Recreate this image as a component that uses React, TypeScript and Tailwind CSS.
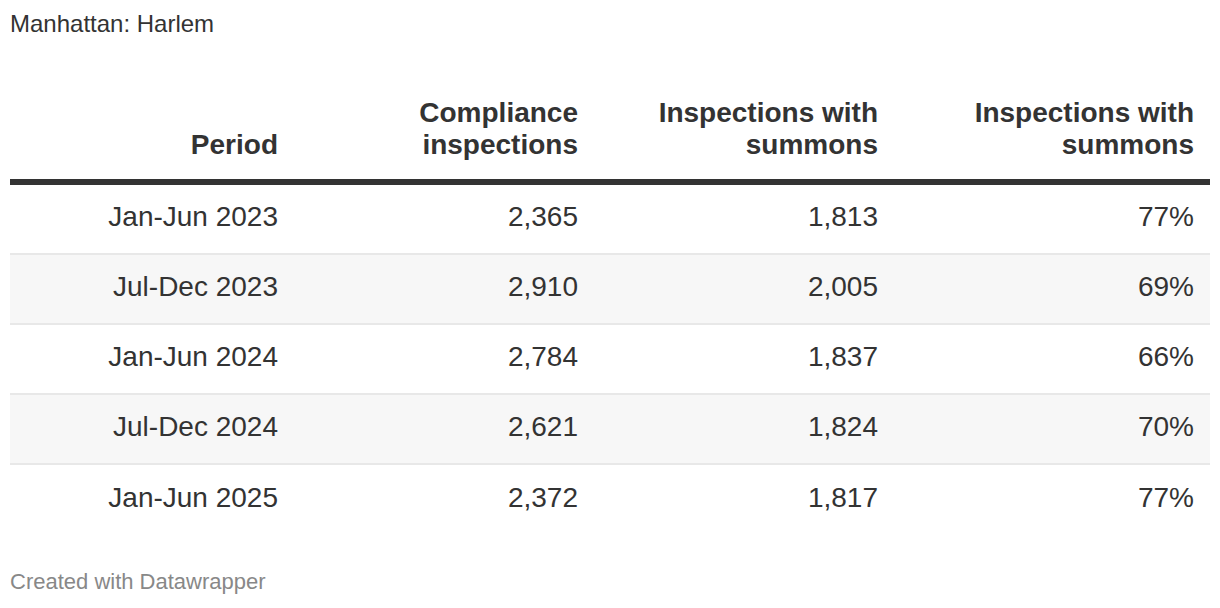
// App.tsx
const rows = [
  { period: 'Jan-Jun 2023', inspections: '2,365', summons: '1,813', share: '77%' },
  { period: 'Jul-Dec 2023', inspections: '2,910', summons: '2,005', share: '69%' },
  { period: 'Jan-Jun 2024', inspections: '2,784', summons: '1,837', share: '66%' },
  { period: 'Jul-Dec 2024', inspections: '2,621', summons: '1,824', share: '70%' },
  { period: 'Jan-Jun 2025', inspections: '2,372', summons: '1,817', share: '77%' },
]

const cols = 'grid grid-cols-[268px_300px_300px_332px]'

export default function App() {
  return (
    <div className="h-[608px] w-[1220px] overflow-hidden bg-white px-[10px] font-['Liberation_Sans',Arial,sans-serif] text-[#333333]">
      <p className="pt-[9px] text-[24px] leading-[30px]">Manhattan: Harlem</p>

      <div className="mt-[58px]">
        <div className={`${cols} items-end border-b-[6px] border-[#333333] pb-[18px] text-right text-[28px] font-bold leading-[32px]`}>
          <div>Period</div>
          <div>
            Compliance
            <br />
            inspections
          </div>
          <div>
            Inspections with
            <br />
            summons
          </div>
          <div className="pr-[16px]">
            Inspections with
            <br />
            summons
          </div>
        </div>

        {rows.map((r, i) => (
          <div
            key={r.period}
            className={`${cols} h-[70px] items-center pb-[4px] text-right text-[28px] leading-[32px] ${
              i % 2 === 1 ? 'bg-[#f7f7f7]' : 'bg-white'
            } ${i < rows.length - 1 ? 'border-b-2 border-[#e8e8e8]' : ''}`}
          >
            <div>{r.period}</div>
            <div>{r.inspections}</div>
            <div>{r.summons}</div>
            <div className="pr-[16px]">{r.share}</div>
          </div>
        ))}
      </div>

      <p className="mt-[33px] text-[22px] leading-[28px] text-[#888888]">Created with Datawrapper</p>
    </div>
  )
}
